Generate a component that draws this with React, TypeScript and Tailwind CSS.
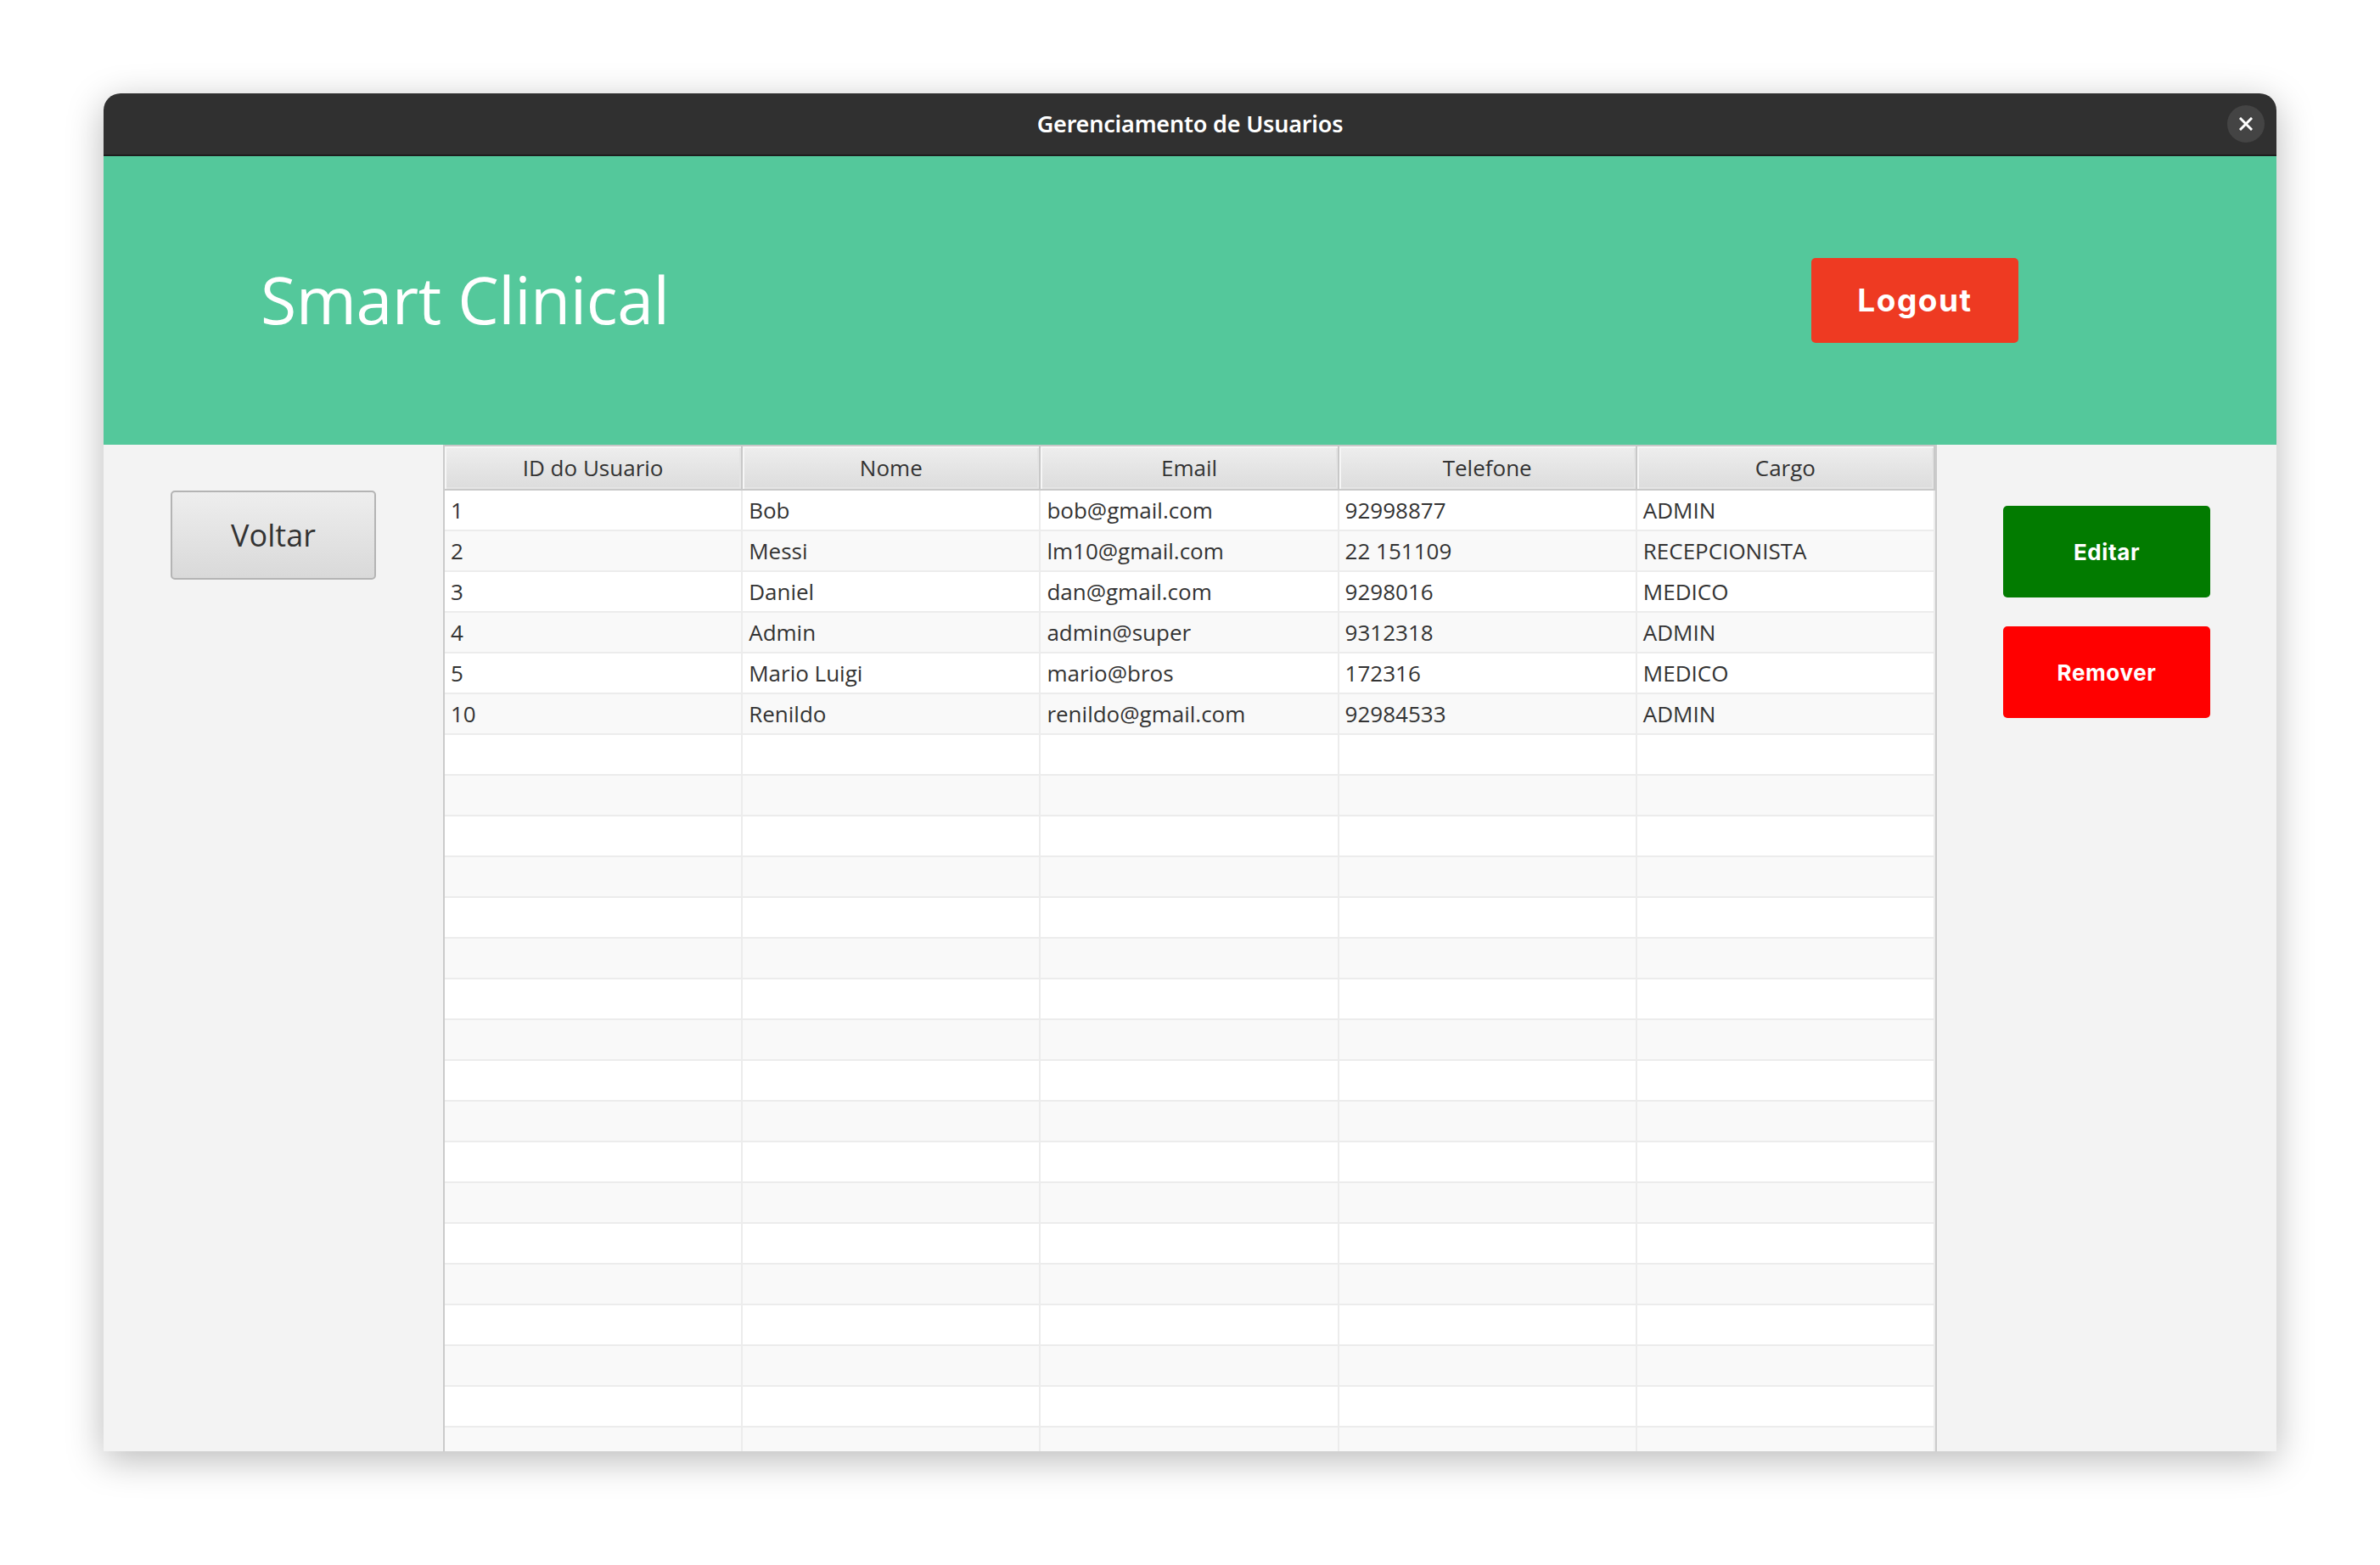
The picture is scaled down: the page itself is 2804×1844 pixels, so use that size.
const users = [
  { id: "1", nome: "Bob", email: "bob@gmail.com", telefone: "92998877", cargo: "ADMIN" },
  { id: "2", nome: "Messi", email: "lm10@gmail.com", telefone: "22 151109", cargo: "RECEPCIONISTA" },
  { id: "3", nome: "Daniel", email: "dan@gmail.com", telefone: "9298016", cargo: "MEDICO" },
  { id: "4", nome: "Admin", email: "admin@super", telefone: "9312318", cargo: "ADMIN" },
  { id: "5", nome: "Mario Luigi", email: "mario@bros", telefone: "172316", cargo: "MEDICO" },
  { id: "10", nome: "Renildo", email: "renildo@gmail.com", telefone: "92984533", cargo: "ADMIN" },
];

const columns = ["ID do Usuario", "Nome", "Email", "Telefone", "Cargo"];

// empty rows fill the rest of the table view
const rows = [
  ...users.map((u) => [u.id, u.nome, u.email, u.telefone, u.cargo]),
  ...Array.from({ length: 20 }, () => ["", "", "", "", ""]),
];

export default function App() {
  return (
    <div className="w-[2804px] h-[1844px] bg-white overflow-hidden pt-[110px] pl-[122px]">
      <div className="w-[2560px] h-[1600px] flex flex-col rounded-t-[20px] overflow-hidden shadow-[0_10px_44px_rgba(0,0,0,0.28)]">
        {/* Title bar */}
        <div className="relative h-[74px] shrink-0 bg-[#303030] border-b-2 border-[#1d1d1d] flex items-center justify-center">
          <span className="text-white text-[27px] font-semibold font-['Noto_Sans',sans-serif] tracking-[-0.2px]">
            Gerenciamento de Usuarios
          </span>
          <button className="absolute right-[14px] top-[14px] w-[44px] h-[44px] rounded-full bg-[#444444] flex items-center justify-center">
            <svg width="16" height="16" viewBox="0 0 16 16">
              <path d="M2 2 L14 14 M14 2 L2 14" stroke="white" strokeWidth="3" strokeLinecap="square" />
            </svg>
          </button>
        </div>

        {/* Header */}
        <div className="h-[340px] shrink-0 bg-[#54c89b] flex items-center justify-between pl-[185px] pr-[304px]">
          <h1 className="text-white text-[77px] font-normal font-['Open_Sans',sans-serif] leading-none -mt-[4px] tracking-[-0.5px]">
            Smart Clinical
          </h1>
          <button className="w-[244px] h-[100px] rounded-[5px] bg-[#ee3a22] text-white text-[37px] font-bold font-['Inter',sans-serif] tracking-[1.5px]">
            Logout
          </button>
        </div>

        {/* Body */}
        <div className="flex-1 flex bg-[#f3f3f3] min-h-0">
          <div className="w-[400px] shrink-0 pt-[54px] pl-[79px]">
            <button className="w-[242px] h-[105px] rounded-[5px] border-2 border-[#b4b4b4] bg-gradient-to-b from-[#eeeeee] to-[#d9d9d9] text-[#333333] text-[36px] font-['Open_Sans',sans-serif]">
              Voltar
            </button>
          </div>

          <div className="w-[1760px] shrink-0 border-l-2 border-r-2 border-[#cbcbcb] bg-white overflow-hidden font-['Open_Sans',sans-serif]">
            <div className="grid grid-cols-5 h-[54px] border-y-2 border-[#c8c8c8]">
              {columns.map((c) => (
                <div
                  key={c}
                  className="flex items-center justify-center border-r-2 border-[#c8c8c8] bg-gradient-to-b from-[#eeeeee] to-[#dcdcdc] shadow-[inset_2px_2px_0_#f6f6f6,inset_-2px_-2px_0_#e4e4e4] text-[#333333] text-[26px]"
                >
                  {c}
                </div>
              ))}
            </div>
            {rows.map((r, i) => (
              <div
                key={i}
                className={`grid grid-cols-5 h-[48px] border-b-2 border-[#ececec] ${i % 2 === 0 ? "bg-white" : "bg-[#f9f9f9]"}`}
              >
                {r.map((v, j) => (
                  <div key={j} className="flex items-center pl-[7px] border-r-2 border-[#ececec] text-[#333333] text-[26px]">
                    {v}
                  </div>
                ))}
              </div>
            ))}
          </div>

          <div className="flex-1 pt-[72px] pl-[78px] flex flex-col gap-[34px] font-['Inter',sans-serif]">
            <button className="w-[244px] h-[108px] rounded-[5px] bg-[#027b00] text-white text-[26px] font-bold tracking-[0.6px]">
              Editar
            </button>
            <button className="w-[244px] h-[108px] rounded-[5px] bg-[#ff0000] text-white text-[26px] font-bold tracking-[0.6px]">
              Remover
            </button>
          </div>
        </div>
      </div>
    </div>
  );
}
